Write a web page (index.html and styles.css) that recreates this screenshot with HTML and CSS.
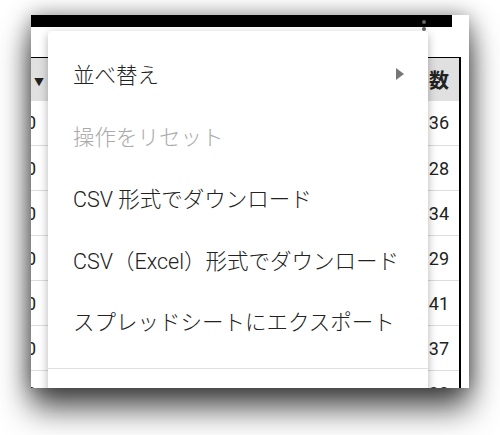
FILE: index.html
```html
<!DOCTYPE html>
<html lang="ja">
<head>
    <meta charset="UTF-8">
    <meta name="viewport" content="width=device-width, initial-scale=1.0">
    <title>メニュー</title>
    <link rel="stylesheet" href="styles.css">
</head>
<body>

<div class="stage">
    <div class="window">
        <div class="topbar"></div>
        <span class="kebab"><i></i><i></i><i></i></span>

        <table class="data-table">
            <thead>
                <tr>
                    <th class="col-first"><span class="sort-arrow">▼</span></th>
                    <th class="col-mid"></th>
                    <th class="col-last">数</th>
                </tr>
            </thead>
            <tbody>
                <tr><td class="col-first">0</td><td></td><td class="col-last">36</td></tr>
                <tr><td class="col-first">0</td><td></td><td class="col-last">28</td></tr>
                <tr><td class="col-first">0</td><td></td><td class="col-last">34</td></tr>
                <tr><td class="col-first">0</td><td></td><td class="col-last">29</td></tr>
                <tr><td class="col-first">0</td><td></td><td class="col-last">41</td></tr>
                <tr><td class="col-first">0</td><td></td><td class="col-last">37</td></tr>
                <tr><td class="col-first">0</td><td></td><td class="col-last">33</td></tr>
            </tbody>
        </table>

        <div class="menu">
            <div class="menu-item">
                <span>並べ替え</span>
                <svg class="submenu-arrow" width="8" height="12" viewBox="0 0 8 12">
                    <polygon points="0,0 8,6 0,12" fill="#777"/>
                </svg>
            </div>
            <div class="menu-item disabled">操作をリセット</div>
            <div class="menu-item">CSV 形式でダウンロード</div>
            <div class="menu-item">CSV（Excel）形式でダウンロード</div>
            <div class="menu-item">スプレッドシートにエクスポート</div>
            <div class="menu-divider"></div>
        </div>
    </div>
</div>

</body>
</html>
```

FILE: styles.css
```css
body {
    margin: 0;
    background-color: #fff;
    font-family: Roboto, "Noto Sans CJK JP", sans-serif;
}
.stage {
    height: 435px;
    padding: 15px 0 0 31px;
    box-sizing: border-box;
}
.window {
    position: relative;
    width: 438px;
    height: 373px;
    overflow: hidden;
    background-color: #fff;
    box-shadow: 0 20px 30px rgba(0, 0, 0, 0.7), 0 0 20px rgba(0, 0, 0, 0.4);
}
.topbar {
    width: 421px;
    height: 12px;
    background-color: #000;
}
.kebab {
    position: absolute;
    left: 391px;
    top: 5px;
    display: flex;
    flex-direction: column;
    gap: 3px;
}
.kebab i {
    display: block;
    width: 4px;
    height: 4px;
    border-radius: 50%;
    background-color: #666;
}
.data-table {
    margin: 30px 0 0 -60px;
    width: 489px;
    table-layout: fixed;
    border-collapse: collapse;
    border-top: 1px solid #000;
    border-right: 2px solid #000;
    font-size: 18px;
    color: #222;
}
.data-table th,
.data-table td {
    box-sizing: border-box;
    padding: 0;
    text-align: right;
}
.data-table th {
    height: 43px;
    background-color: #e0e0e0;
    font-weight: bold;
    font-size: 20px;
}
.data-table td {
    height: 45px;
    border-bottom: 1px solid #ddd;
}
.col-first {
    width: 76px;
}
.data-table td.col-first {
    padding-right: 11px;
}
.data-table th.col-first {
    padding-right: 3px;
}
.col-mid {
    width: 380px;
}
.col-last {
    width: 33px;
}
.data-table .col-last {
    padding-right: 10px;
}
.sort-arrow {
    font-size: 10px;
    font-weight: normal;
}
.menu {
    position: absolute;
    left: 17px;
    top: 16px;
    width: 380px;
    height: 420px;
    padding-top: 12px;
    box-sizing: border-box;
    background-color: #fff;
    border-radius: 4px;
    box-shadow: 0 3px 10px rgba(0, 0, 0, 0.3);
}
.menu-item {
    height: 61.75px;
    padding: 0 24px 0 25px;
    display: flex;
    align-items: center;
    justify-content: space-between;
    font-size: 21.5px;
    font-weight: 300;
    color: #222;
    white-space: nowrap;
}
.menu-item.disabled {
    color: #aaa;
}
.menu-divider {
    margin-top: 16px;
    height: 1px;
    background-color: #e0e0e0;
}
```
